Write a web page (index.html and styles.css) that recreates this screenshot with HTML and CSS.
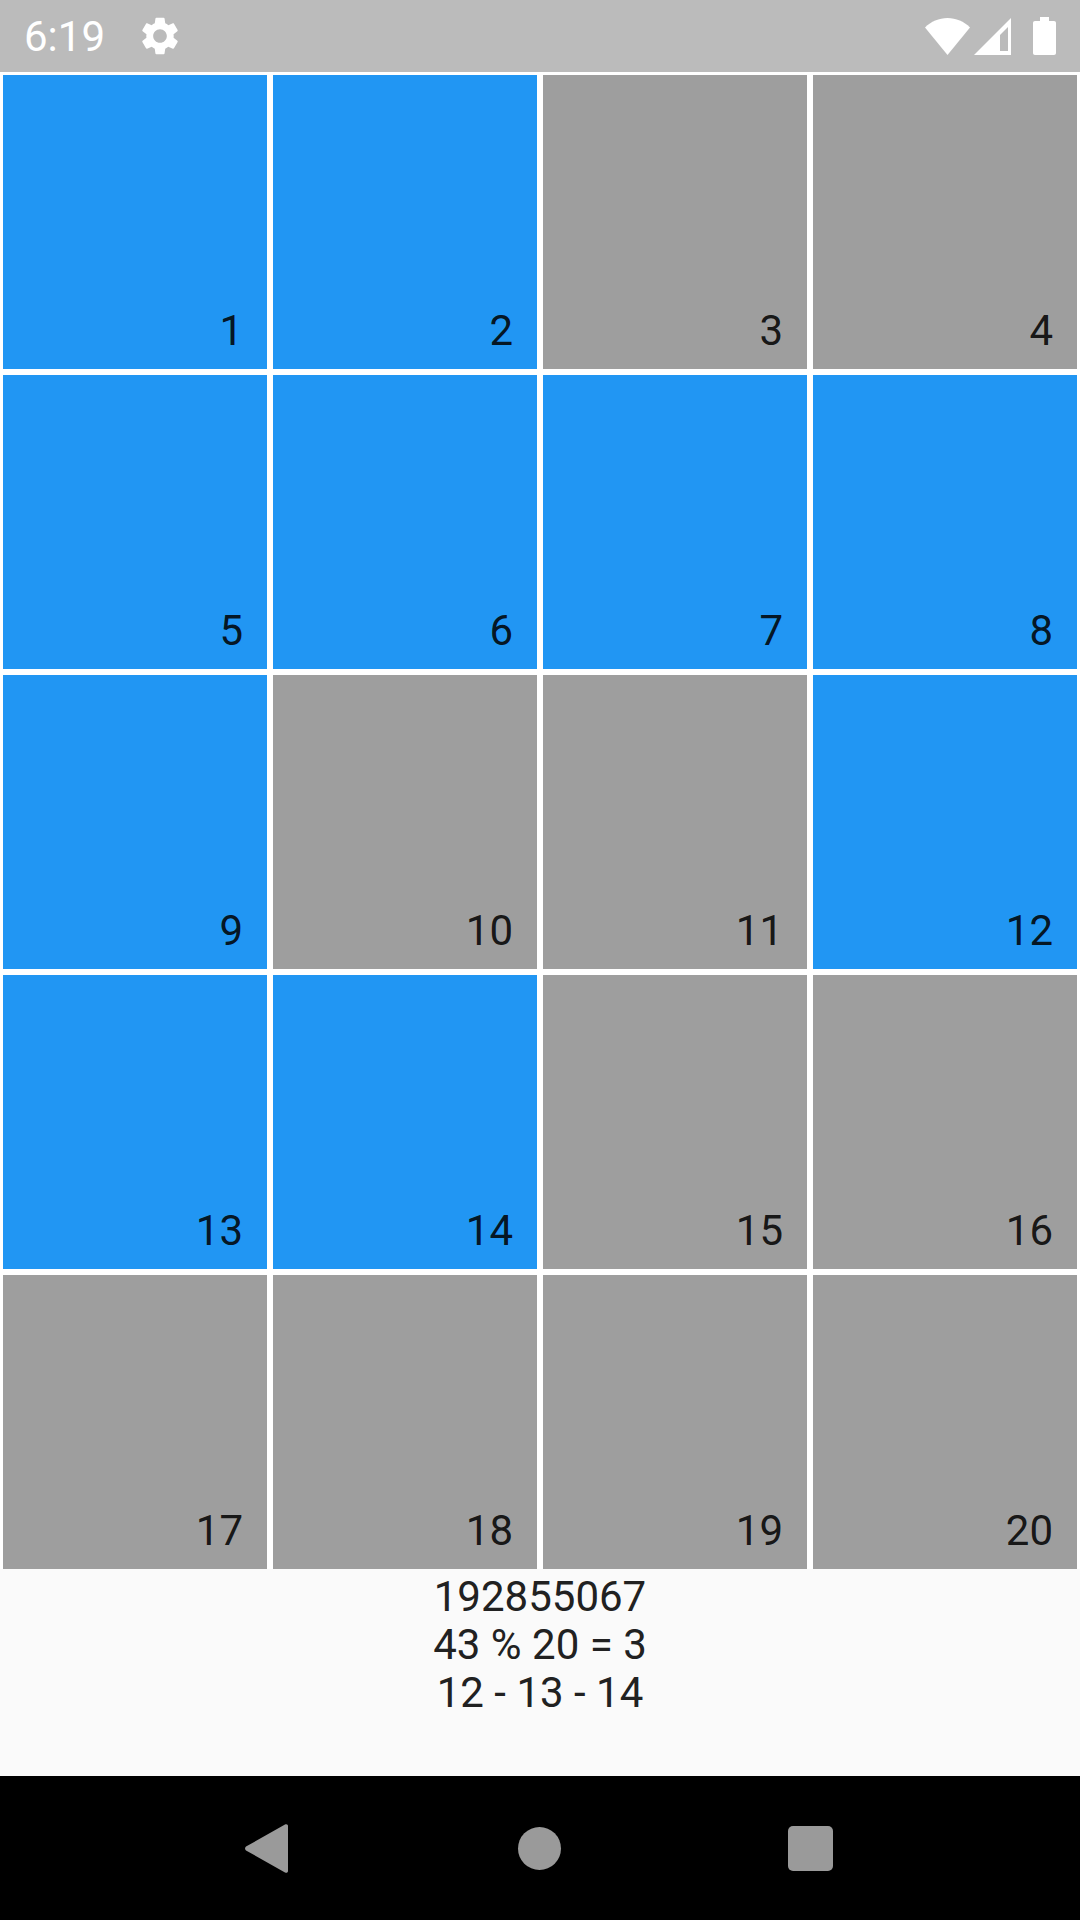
FILE: index.html
```html
<!DOCTYPE html>
<html lang="en">
  <head>
    <meta charset="UTF-8" />
    <meta name="viewport" content="width=device-width, initial-scale=1.0" />
    <title>Tiles</title>
    <link rel="stylesheet" href="styles.css">
  </head>
  <body>
    <div class="status-bar">
      <span class="clock">6:19</span>
      <svg class="icon-gear" viewBox="2.6 2 18.8 20">
        <path fill-rule="evenodd" d="M19.14 12.94c.04-.3.06-.61.06-.94 0-.32-.02-.64-.07-.94l2.03-1.58c.18-.14.23-.41.12-.61l-1.92-3.32c-.12-.22-.37-.29-.59-.22l-2.39.96c-.5-.38-1.03-.7-1.62-.94l-.36-2.54c-.04-.24-.24-.41-.48-.41h-3.84c-.24 0-.43.17-.47.41l-.36 2.54c-.59.24-1.13.57-1.62.94l-2.39-.96c-.22-.08-.47 0-.59.22L2.74 8.87c-.12.21-.08.47.12.61l2.03 1.58c-.05.3-.09.63-.09.94s.02.64.07.94l-2.03 1.58c-.18.14-.23.41-.12.61l1.92 3.32c.12.22.37.29.59.22l2.39-.96c.5.38 1.03.7 1.62.94l.36 2.54c.05.24.24.41.48.41h3.84c.24 0 .44-.17.47-.41l.36-2.54c.59-.24 1.13-.56 1.62-.94l2.39.96c.22.08.47 0 .59-.22l1.92-3.32c.12-.22.07-.47-.12-.61l-2.01-1.58zM12 15.6c-1.98 0-3.6-1.62-3.6-3.6s1.62-3.6 3.6-3.6 3.6 1.62 3.6 3.6-1.62 3.6-3.6 3.6z" />
      </svg>
      <div class="status-right">
        <svg class="icon-wifi" viewBox="0 0 45 37">
          <path d="M0 9.5C6 3.5 14 0 22.5 0S39 3.5 45 9.5L22.5 37z" />
        </svg>
        <svg class="icon-signal" viewBox="0 0 37 37">
          <path fill-rule="evenodd" d="M0 37L37 0V37zM26 17V33H34V9z" />
        </svg>
        <svg class="icon-battery" viewBox="0 0 23 38">
          <path d="M7 0H16V4H21C22.2 4 23 4.8 23 6V36C23 37.2 22.2 38 21 38H2C.8 38 0 37.2 0 36V6C0 4.8 .8 4 2 4H7z" />
        </svg>
      </div>
    </div>

    <div class="grid">
      <div class="tile on"><span>1</span></div>
      <div class="tile on"><span>2</span></div>
      <div class="tile"><span>3</span></div>
      <div class="tile"><span>4</span></div>
      <div class="tile on"><span>5</span></div>
      <div class="tile on"><span>6</span></div>
      <div class="tile on"><span>7</span></div>
      <div class="tile on"><span>8</span></div>
      <div class="tile on"><span>9</span></div>
      <div class="tile"><span>10</span></div>
      <div class="tile"><span>11</span></div>
      <div class="tile on"><span>12</span></div>
      <div class="tile on"><span>13</span></div>
      <div class="tile on"><span>14</span></div>
      <div class="tile"><span>15</span></div>
      <div class="tile"><span>16</span></div>
      <div class="tile"><span>17</span></div>
      <div class="tile"><span>18</span></div>
      <div class="tile"><span>19</span></div>
      <div class="tile"><span>20</span></div>
    </div>

    <div class="result">
      <div>192855067</div>
      <div>43 % 20 = 3</div>
      <div>12 - 13 - 14</div>
    </div>

    <div class="nav-bar">
      <svg class="nav-back" viewBox="0 0 43 49">
        <path d="M40 .6C41.5-.4 43 .4 43 2V47C43 48.6 41.5 49.4 40 48.4L1 26.5C-.3 25.6-.3 23.4 1 22.5z" />
      </svg>
      <div class="nav-home"></div>
      <div class="nav-recent"></div>
    </div>
  </body>
</html>
```

FILE: styles.css
```css
body {
  margin: 0;
  width: 1080px;
  height: 1920px;
  display: flex;
  flex-direction: column;
  font-family: Roboto, sans-serif;
  background-color: #fafafa;
  color: #212121;
  overflow: hidden;
}

/* Status bar */
.status-bar {
  height: 72px;
  flex-shrink: 0;
  display: flex;
  align-items: center;
  padding: 0 24px 0 24px;
  background-color: #bbbbbb;
  color: #ffffff;
  fill: #ffffff;
}

.clock {
  font-size: 42px;
  line-height: 72px;
  padding-top: 2px;
  width: 118px;
}

.icon-gear {
  width: 36px;
  height: 38px;
}

.status-right {
  margin-left: auto;
  display: flex;
  align-items: center;
}

.icon-wifi {
  width: 45px;
  height: 37px;
}

.icon-signal {
  width: 37px;
  height: 37px;
  margin-left: 4px;
}

.icon-battery {
  width: 23px;
  height: 38px;
  margin-left: 22px;
}

/* Tiles */
.grid {
  display: grid;
  grid-template-columns: repeat(4, 264px);
  grid-auto-rows: 294px;
  gap: 6px;
  padding: 3px 3px 0;
  background-color: #ffffff;
  flex-shrink: 0;
}

.tile {
  display: flex;
  justify-content: flex-end;
  align-items: flex-end;
  padding: 0 24px 14px 0;
  background-color: #9e9e9e;
  color: rgba(0, 0, 0, 0.87);
  font-size: 42px;
  line-height: 49px;
}

.tile.on {
  background-color: #2196f3;
}

/* Text under the tiles */
.result {
  flex: 1;
  padding-top: 4px;
  text-align: center;
  font-size: 42px;
  line-height: 48px;
}

/* Navigation bar */
.nav-bar {
  height: 144px;
  flex-shrink: 0;
  display: flex;
  align-items: center;
  background-color: #000000;
  fill: #9a9a9a;
  padding-left: 245px;
}

.nav-back {
  width: 43px;
  height: 49px;
}

.nav-home {
  width: 43px;
  height: 43px;
  margin-left: 230px;
  border-radius: 50%;
  background-color: #9a9a9a;
}

.nav-recent {
  width: 45px;
  height: 45px;
  margin-left: 227px;
  border-radius: 5px;
  background-color: #9a9a9a;
}
```
